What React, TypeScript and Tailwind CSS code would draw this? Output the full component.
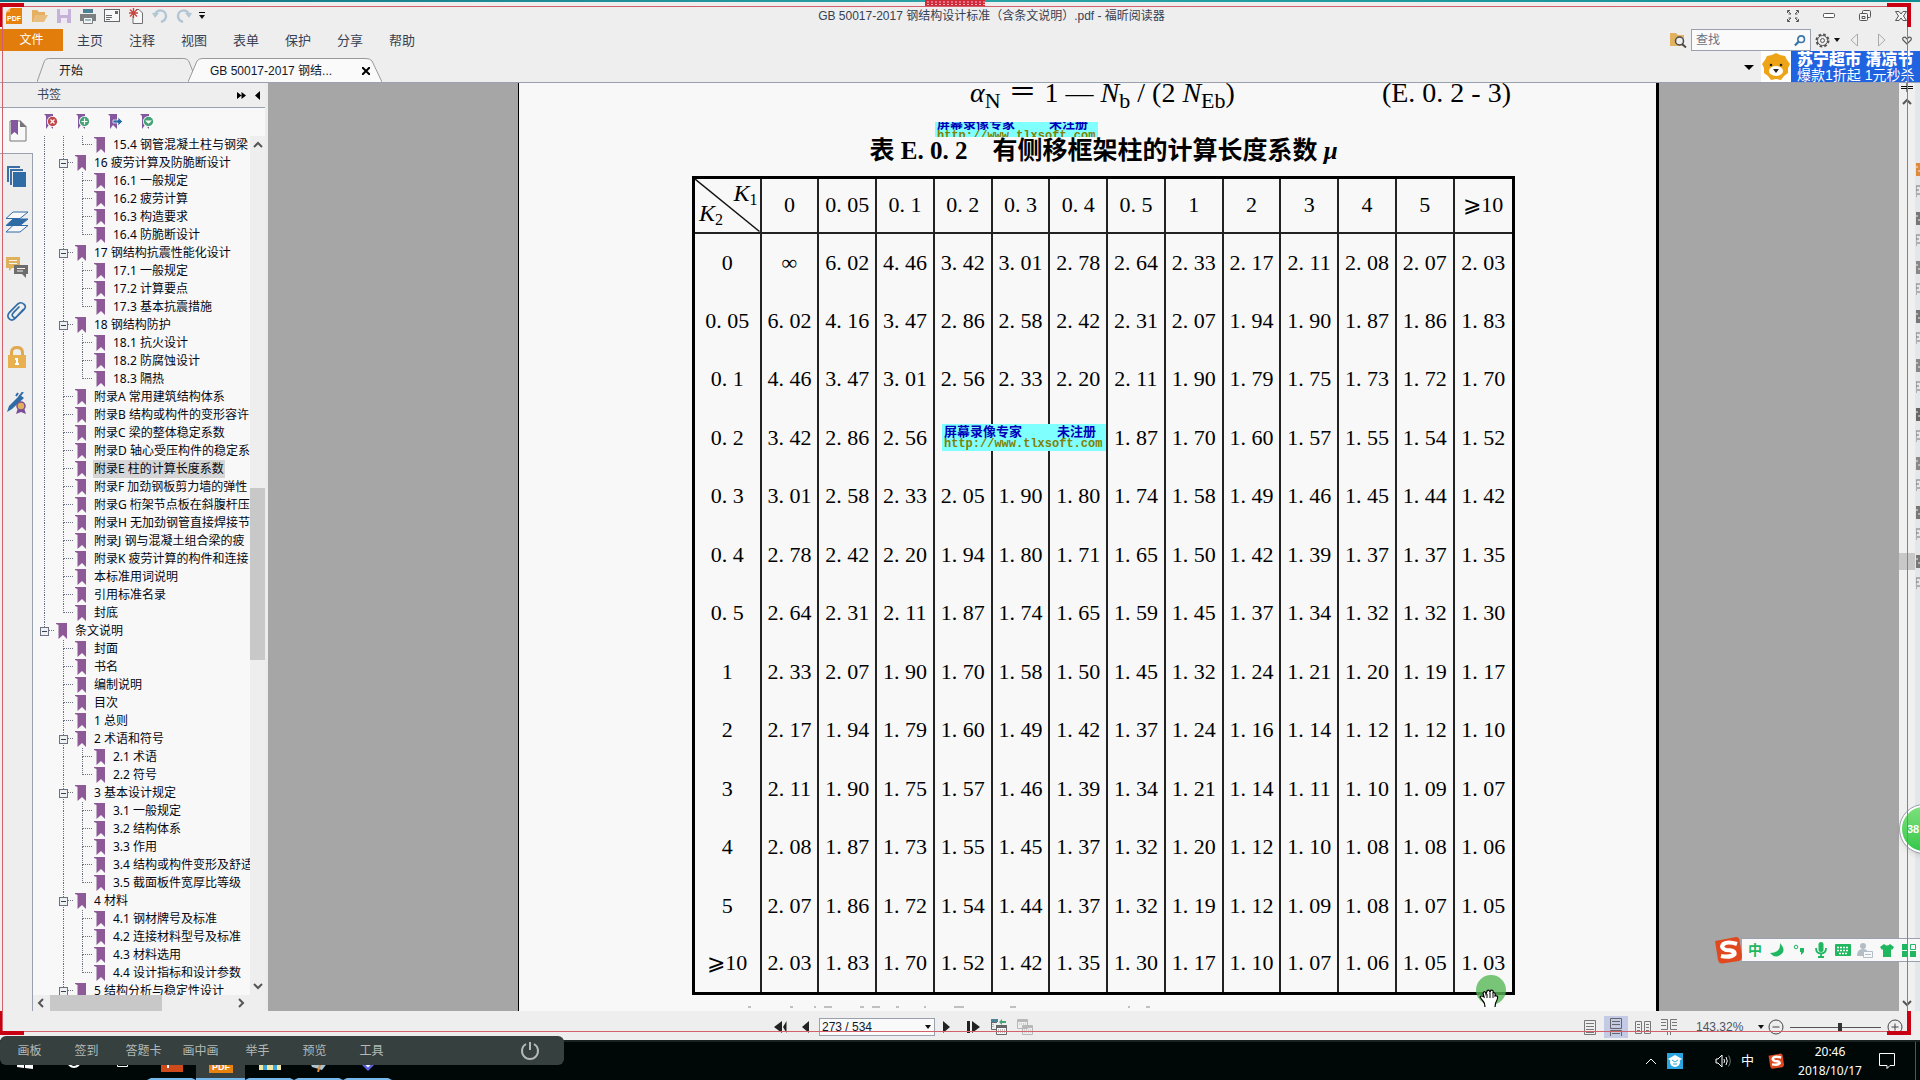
import type { ReactNode } from 'react';

const bookmarks = [
  { level: 3, text: '15.4 钢管混凝土柱与钢梁', last: true },
  { level: 2, text: '16 疲劳计算及防脆断设计', open: true },
  { level: 3, text: '16.1 一般规定' },
  { level: 3, text: '16.2 疲劳计算' },
  { level: 3, text: '16.3 构造要求' },
  { level: 3, text: '16.4 防脆断设计', last: true },
  { level: 2, text: '17 钢结构抗震性能化设计', open: true },
  { level: 3, text: '17.1 一般规定' },
  { level: 3, text: '17.2 计算要点' },
  { level: 3, text: '17.3 基本抗震措施', last: true },
  { level: 2, text: '18 钢结构防护', open: true },
  { level: 3, text: '18.1 抗火设计' },
  { level: 3, text: '18.2 防腐蚀设计' },
  { level: 3, text: '18.3 隔热', last: true },
  { level: 2, text: '附录A 常用建筑结构体系' },
  { level: 2, text: '附录B 结构或构件的变形容许' },
  { level: 2, text: '附录C 梁的整体稳定系数' },
  { level: 2, text: '附录D 轴心受压构件的稳定系' },
  { level: 2, text: '附录E 柱的计算长度系数', selected: true },
  { level: 2, text: '附录F 加劲钢板剪力墙的弹性' },
  { level: 2, text: '附录G 桁架节点板在斜腹杆压' },
  { level: 2, text: '附录H 无加劲钢管直接焊接节' },
  { level: 2, text: '附录J 钢与混凝土组合梁的疲' },
  { level: 2, text: '附录K 疲劳计算的构件和连接' },
  { level: 2, text: '本标准用词说明' },
  { level: 2, text: '引用标准名录' },
  { level: 2, text: '封底', last: true },
  { level: 1, text: '条文说明', open: true, last: true },
  { level: 2, text: '封面' },
  { level: 2, text: '书名' },
  { level: 2, text: '编制说明' },
  { level: 2, text: '目次' },
  { level: 2, text: '1 总则' },
  { level: 2, text: '2 术语和符号', open: true },
  { level: 3, text: '2.1 术语' },
  { level: 3, text: '2.2 符号', last: true },
  { level: 2, text: '3 基本设计规定', open: true },
  { level: 3, text: '3.1 一般规定' },
  { level: 3, text: '3.2 结构体系' },
  { level: 3, text: '3.3 作用' },
  { level: 3, text: '3.4 结构或构件变形及舒适' },
  { level: 3, text: '3.5 截面板件宽厚比等级', last: true },
  { level: 2, text: '4 材料', open: true },
  { level: 3, text: '4.1 钢材牌号及标准' },
  { level: 3, text: '4.2 连接材料型号及标准' },
  { level: 3, text: '4.3 材料选用' },
  { level: 3, text: '4.4 设计指标和设计参数', last: true },
  { level: 2, text: '5 结构分析与稳定性设计', open: true },
];

const lastRoot = bookmarks.findIndex((b) => b.level === 1);

const heads = ['0', '0.05', '0.1', '0.2', '0.3', '0.4', '0.5', '1', '2', '3', '4', '5', '⩾10'];

const values = [
  '∞ 6.02 4.46 3.42 3.01 2.78 2.64 2.33 2.17 2.11 2.08 2.07 2.03',
  '6.02 4.16 3.47 2.86 2.58 2.42 2.31 2.07 1.94 1.90 1.87 1.86 1.83',
  '4.46 3.47 3.01 2.56 2.33 2.20 2.11 1.90 1.79 1.75 1.73 1.72 1.70',
  '3.42 2.86 2.56 - - - 1.87 1.70 1.60 1.57 1.55 1.54 1.52',
  '3.01 2.58 2.33 2.05 1.90 1.80 1.74 1.58 1.49 1.46 1.45 1.44 1.42',
  '2.78 2.42 2.20 1.94 1.80 1.71 1.65 1.50 1.42 1.39 1.37 1.37 1.35',
  '2.64 2.31 2.11 1.87 1.74 1.65 1.59 1.45 1.37 1.34 1.32 1.32 1.30',
  '2.33 2.07 1.90 1.70 1.58 1.50 1.45 1.32 1.24 1.21 1.20 1.19 1.17',
  '2.17 1.94 1.79 1.60 1.49 1.42 1.37 1.24 1.16 1.14 1.12 1.12 1.10',
  '2.11 1.90 1.75 1.57 1.46 1.39 1.34 1.21 1.14 1.11 1.10 1.09 1.07',
  '2.08 1.87 1.73 1.55 1.45 1.37 1.32 1.20 1.12 1.10 1.08 1.08 1.06',
  '2.07 1.86 1.72 1.54 1.44 1.37 1.32 1.19 1.12 1.09 1.08 1.07 1.05',
  '2.03 1.83 1.70 1.52 1.42 1.35 1.30 1.17 1.10 1.07 1.06 1.05 1.03',
];

// book typesetting leaves a gap after the decimal point
const spaced = (v: string) => (v === '-' ? '' : v.replace('.', '. '));

const Flag = () => (
  <svg width="11" height="16" viewBox="0 0 11 16" className="shrink-0">
    <path d="M0 0H11V16L7 12L2.500 16V2L0 1Z" fill="#8d5a97" />
  </svg>
);

const FlagBadge = ({ color, children }: { color: string; children: ReactNode }) => (
  <svg width="16" height="18" viewBox="0 0 16 18">
    <path d="M1 1H10V16L6 12L3 16V3Z" fill="#8457a0" />
    <circle cx="9.500" cy="8.500" r="5.500" fill="#fff" />
    <circle cx="9.500" cy="8.500" r="4.700" fill={color} />
    <g stroke="#fff" strokeWidth="1.200" fill="none">{children}</g>
  </svg>
);

const Sogou = ({ size }: { size: number }) => (
  <svg width={size} height={size} viewBox="0 0 28 28">
    <path d="M1 5L22 1Q25 1 25.500 4L28 20Q28 24 25 25L8 27.500Q5 27.500 4 24Z" fill="#e0481f" />
    <path d="M23 8Q14 5 9.500 8Q6 12 12 14Q21 14 20.500 18Q17 22 7 20" fill="none" stroke="#fff" strokeWidth="4.200" />
  </svg>
);

const Caret = () => (
  <svg width="6" height="4" viewBox="0 0 6 4">
    <path d="M0 0H6L3 4Z" fill="#111" />
  </svg>
);

const Chevron = ({ d }: { d: string }) => (
  <svg width="10" height="10" viewBox="0 0 10 10" fill="none" stroke="#555" strokeWidth="2">
    <path d={d} />
  </svg>
);

const TreeCell = ({ line, joint, end, open }: { line: boolean; joint: boolean; end: boolean; open: boolean }) => (
  <span className="relative flex w-[19px] shrink-0 flex-col pl-[9px]">
    <span className={`h-[9px] ${line ? 'border-l border-dotted border-gray-500' : ''} ${joint ? 'border-b border-dotted border-b-gray-500' : ''}`} />
    <span className={`h-[9px] ${line && !end ? 'border-l border-dotted border-gray-500' : ''}`} />
    {open && (
      <button aria-label="折叠" className="absolute left-[5px] top-[5px] flex h-[9px] w-[9px] items-center justify-center border border-gray-500 bg-[#eef0f2]">
        <span className="h-px w-[5px] bg-gray-700" />
      </button>
    )}
  </span>
);

const Quick = () => (
  <div className="flex items-center">
    <button aria-label="福昕阅读器" className="mr-[2px] flex w-6 justify-center">
      <svg width="16" height="16" viewBox="0 0 16 16">
        <path d="M5 0H16V16H0V5Z" fill="#e8820e" />
        <path d="M0 4L4 0V4Z" fill="#f3b56a" />
        <text x="1" y="13" fontSize="7" fontWeight="bold" fill="#fff" fontFamily="Liberation Sans">PDF</text>
      </svg>
    </button>
    <button aria-label="打开" className="flex w-6 justify-center">
      <svg width="16" height="14" viewBox="0 0 16 14">
        <path d="M0 1H5L7 3H13V6H4L1 13H0Z" fill="#e6b062" />
        <path d="M4 6H16L12 13H1Z" fill="#e9bd7e" />
      </svg>
    </button>
    <button aria-label="保存" className="flex w-6 justify-center">
      <svg width="14" height="14" viewBox="0 0 14 14">
        <path d="M0 0H14V14H0Z" fill="#c4b2d8" />
        <path d="M3 0H11V6H3Z M4 9H10V14H4Z" fill="#eee8f4" />
      </svg>
    </button>
    <button aria-label="打印" className="flex w-6 justify-center">
      <svg width="16" height="16" viewBox="0 0 16 16">
        <path d="M3 1H13V5H3Z" fill="#4b8296" />
        <path d="M0 6H16V13H0Z" fill="#7b7f82" />
        <path d="M3.500 9.500H12.500V15.500H3.500Z" fill="#f4f4f4" stroke="#7b7f82" />
        <path d="M5 12H11" stroke="#4b8296" />
      </svg>
    </button>
    <button aria-label="邮件" className="flex w-6 justify-center">
      <svg width="16" height="13" viewBox="0 0 16 13" fill="none" stroke="#65686a">
        <rect x=".5" y=".5" width="15" height="12" fill="#f8f8f8" />
        <path d="M2 6.500H8M2 8.500H8M2 10.500H6" />
        <path d="M11 2H14V5H11Z" fill="#65686a" stroke="none" />
      </svg>
    </button>
    <button aria-label="新建" className="flex w-6 justify-center">
      <svg width="15" height="16" viewBox="0 0 15 16" fill="none">
        <path d="M4 8V15.500H13.500V5L10 1.500H7" stroke="#707070" fill="#f8f8f8" />
        <path d="M4.500 0V10M0 5H9M1 1.500L8 8.500M8 1.500L1 8.500" stroke="#c8443c" strokeWidth="1.300" />
      </svg>
    </button>
    <button aria-label="撤销" className="flex w-6 justify-center">
      <svg width="16" height="15" viewBox="0 0 16 15">
        <path d="M3 7C4 1 14 1 14 8C14 11 12 13 9 14" fill="none" stroke="#b3c6d4" strokeWidth="2.500" />
        <path d="M0 5H7L3 10Z" fill="#b3c6d4" />
      </svg>
    </button>
    <button aria-label="重做" className="flex w-6 justify-center">
      <svg width="16" height="15" viewBox="0 0 16 15">
        <path d="M13 7C12 1 2 1 2 8C2 11 4 13 7 14" fill="none" stroke="#b3c6d4" strokeWidth="2.500" />
        <path d="M16 5H9L13 10Z" fill="#b3c6d4" />
      </svg>
    </button>
    <button aria-label="自定义" className="flex w-3 flex-col items-center gap-[2px]">
      <span className="h-px w-[6px] bg-black" />
      <Caret />
    </button>
  </div>
);

const WindowButtons = () => (
  <div className="flex items-center text-gray-600">
    <button aria-label="全屏" className="flex w-9 justify-center">
      <svg width="14" height="14" viewBox="0 0 14 14" fill="none" stroke="#555">
        <path d="M1.500 4V1.500H4M2 2L5 5H2.500M10 1.500H12.500V4M12 2L9 5H11.500M1.500 10V12.500H4M2 12L5 9H2.500M10 12.500H12.500V10M12 12L9 9H11.500" />
      </svg>
    </button>
    <button aria-label="最小化" className="flex w-9 justify-center">
      <svg width="12" height="5" viewBox="0 0 12 5">
        <rect x=".5" y=".5" width="11" height="4" rx="1" fill="#fff" stroke="#555" />
      </svg>
    </button>
    <button aria-label="还原" className="flex w-9 justify-center">
      <svg width="12" height="12" viewBox="0 0 12 12" fill="#f4f4f4" stroke="#555">
        <rect x="3.500" y=".5" width="8" height="7" rx="1" />
        <rect x=".5" y="3.500" width="8" height="7" rx="1" />
        <path d="M3 6.500H6V8.500H3Z" />
      </svg>
    </button>
    <button aria-label="关闭" className="flex w-9 justify-center">
      <svg width="12" height="10" viewBox="0 0 12 10">
        <path d="M.5.5H4L6 3L8 .5H11.500L8.500 5L11.500 9.500H8L6 7L4 9.500H.5L3.500 5Z" fill="#f4f4f4" stroke="#555" />
      </svg>
    </button>
  </div>
);

const SearchBar = () => (
  <div className="flex items-center">
    <svg width="17" height="16" viewBox="0 0 17 16" className="mr-1">
      <path d="M0 1H6L8 3H14V14H0Z" fill="#e2b263" />
      <circle cx="9.500" cy="9" r="4" fill="#eee" stroke="#4a4a4a" strokeWidth="1.500" />
      <path d="M12 12L16 15.500" stroke="#4a4a4a" strokeWidth="2" />
    </svg>
    <div className="flex h-[22px] w-[120px] items-center border border-gray-400 bg-[#fafafa] pr-1">
      <input aria-label="查找" placeholder="查找" className="w-full min-w-0 bg-transparent pl-1 text-xs outline-none placeholder:text-gray-500" />
      <svg width="13" height="13" viewBox="0 0 13 13" fill="none" stroke="#3974a8">
        <circle cx="8" cy="5" r="3.700" strokeWidth="1.800" />
        <path d="M5.500 7.500L1 12" strokeWidth="2.500" />
      </svg>
    </div>
    <button aria-label="设置" className="ml-1 flex items-center gap-1">
      <svg width="15" height="15" viewBox="0 0 15 15" fill="none" stroke="#555">
        <circle cx="7.500" cy="7.500" r="6" strokeWidth="2" strokeDasharray="2.700 2" />
        <circle cx="7.500" cy="7.500" r="5" />
        <circle cx="7.500" cy="7.500" r="2" />
      </svg>
      <Caret />
    </button>
    <button aria-label="上一个" className="ml-[2px] flex w-6 justify-center">
      <svg width="8" height="14" viewBox="0 0 8 14" fill="none" stroke="#aaa"><path d="M7.500 1V13L1 7Z" /></svg>
    </button>
    <button aria-label="下一个" className="ml-1 flex w-6 justify-center">
      <svg width="8" height="14" viewBox="0 0 8 14" fill="none" stroke="#aaa"><path d="M.5 1V13L7 7Z" /></svg>
    </button>
    <button aria-label="收藏" className="flex w-[26px] justify-center">
      <svg width="10" height="9" viewBox="0 0 10 9" fill="none" stroke="#555" strokeWidth="1.200">
        <path d="M5 8L1 4Q0 1 3 1L5 3L7 1Q10 1 9 4Z" />
      </svg>
    </button>
  </div>
);

const Tab = ({ active, className, children }: { active?: boolean; className: string; children: ReactNode }) => (
  <div className={`relative flex h-6 items-center pt-[2px] ${className}`}>
    <svg viewBox="0 0 194 24" preserveAspectRatio="none" className="absolute inset-0 h-full w-full">
      <path d="M0 24L9 3Q11 .5 14 .5H178Q182 .5 184 3L194 24" fill={active ? '#fafafa' : '#eeeeee'} stroke="#999" vectorEffect="non-scaling-stroke" />
    </svg>
    {children}
  </div>
);

const Banner = () => (
  <div className="flex h-[31px] items-stretch">
    <span className="flex w-[30px] items-center justify-center bg-white">
      <svg width="30" height="30" viewBox="0 0 30 30">
        <path d="M15 1L19 3L24 4L26 8L29 12L27 16L27 21L23 24L20 28L15 27L10 28L7 24L3 21L3 16L1 12L4 8L6 4L11 3Z" fill="#eea417" />
        <ellipse cx="15" cy="19" rx="7" ry="5" fill="#fff" />
        <circle cx="10" cy="13" r="1.300" fill="#222" />
        <circle cx="20" cy="13" r="1.300" fill="#222" />
        <path d="M12 17H18L15 21Z" fill="#222" />
      </svg>
    </span>
    <a href="#" className="flex w-[129px] flex-col justify-center overflow-hidden whitespace-nowrap bg-[#1f63e0] pl-[6px] text-white">
      <span className="text-base font-black leading-4">苏宁超市 清凉节</span>
      <span className="text-sm leading-[14px]">爆款1折起 1元秒杀</span>
    </a>
  </div>
);

const NavStrip = () => (
  <nav className="flex w-[33px] shrink-0 flex-col">
    <button aria-label="书签" className="flex h-[46px] items-center justify-center border-b border-gray-400 bg-[#f8f8f8] pl-[2px]">
      <svg width="18" height="22" viewBox="0 0 18 22">
        <path d="M1 1H11L17 7V21H1Z" fill="#f8f8f8" stroke="#777" />
        <path d="M11 0V7H18Z" fill="#777" />
        <path d="M2 0H9V15L5.500 12L2 15Z" fill="#8457a0" />
      </svg>
    </button>
    <div className="flex flex-1 flex-col border-r border-gray-400 pl-[2px]">
      <button aria-label="页面" className="flex h-[45px] items-center justify-center">
        <svg width="20" height="22" viewBox="0 0 20 22">
          <path d="M1 16V1H13M4 19V4H16" fill="none" stroke="#3a6ea5" strokeWidth="2" />
          <path d="M6 6H19V21H6Z" fill="#2f6ba5" />
        </svg>
      </button>
      <button aria-label="图层" className="flex h-[45px] items-center justify-center">
        <svg width="24" height="22" viewBox="0 0 24 22" stroke="#2f6ba5">
          <path d="M8 14.500H23L15 21H1Z" fill="#f8f8f8" />
          <path d="M8 8H23L15 14.500H1Z" fill="#2f6ba5" />
          <path d="M8 1H23L15 7.500H1Z" fill="#f8f8f8" />
        </svg>
      </button>
      <button aria-label="注释" className="flex h-[45px] items-center justify-center">
        <svg width="22" height="22" viewBox="0 0 22 22">
          <path d="M0 1H14V12H6L3 15V12H0Z" fill="#e0b15c" />
          <path d="M8 9H22V18H20V22L16 18H8Z" fill="#6d6d6d" />
          <path d="M3 4.500H11M3 7.500H11M11 12.500H19M11 15H17" stroke="#f4f4f4" />
        </svg>
      </button>
      <button aria-label="附件" className="flex h-[45px] items-center justify-center">
        <svg width="20" height="21" viewBox="0 0 24 24" fill="none" stroke="#2f6ba5" strokeWidth="2">
          <path d="M20 9L10 20Q6 24 3 21Q-1 18 3 13L13 3Q17 0 20 3Q24 6 20 10L11 19Q8 20 7 18Q5 16 8 13L15 6" />
        </svg>
      </button>
      <button aria-label="安全" className="flex h-[46px] items-center justify-center">
        <svg width="18" height="22" viewBox="0 0 18 22">
          <path d="M3.500 11V6Q4 1.500 9 1.500Q14 1.500 14.500 6V11" fill="none" stroke="#e0a950" strokeWidth="3" />
          <path d="M0 9H18V22H0Z" fill="#e8b04e" />
          <path d="M9 12V18M7 13H10M7 18H11" stroke="#fff" strokeWidth="2" />
        </svg>
      </button>
      <button aria-label="签名" className="flex h-[45px] items-center justify-center">
        <svg width="20" height="22" viewBox="0 0 20 22">
          <path d="M16 0L12 5M11 1L9 4" stroke="#2f6ba5" strokeWidth="2" />
          <path d="M0 20L2 14L13 3L17 6L5 17Z" fill="#2f6ba5" />
          <path d="M11 16L9 22L14 20L19 22L17 16Z" fill="#7b4d96" />
          <circle cx="14" cy="14" r="4" fill="#e0b15c" stroke="#7b4d96" strokeWidth="1.500" />
        </svg>
      </button>
    </div>
  </nav>
);

const BookmarkPanel = () => (
  <aside className="flex w-[268px] shrink-0 flex-col border-r-[3px] border-[#ececec]">
    <header className="flex h-[25px] items-center border-b border-gray-400 pl-[37px] pr-[5px] text-xs text-gray-700">
      <h2 className="flex-1">书签</h2>
      <button aria-label="展开" className="mr-[9px]">
        <svg width="9" height="7" viewBox="0 0 9 7"><path d="M0 0L4.500 3.500L0 7ZM4.500 0L9 3.500L4.500 7Z" /></svg>
      </button>
      <button aria-label="隐藏">
        <svg width="5" height="9" viewBox="0 0 5 9"><path d="M5 0V9L0 4.500Z" /></svg>
      </button>
    </header>
    <div className="flex min-h-0 flex-1">
      <NavStrip />
      <div className="flex min-w-0 flex-1 flex-col bg-[#f8f8f8]">
        <div className="flex h-7 shrink-0 items-center gap-4 pl-[10px]">
          <button aria-label="删除书签"><FlagBadge color="#c0484a"><path d="M7.500 6.500L11.500 10.500M11.500 6.500L7.500 10.500" /></FlagBadge></button>
          <button aria-label="新建书签"><FlagBadge color="#45a377"><path d="M9.500 5.500V11.500M6.500 8.500H12.500" /></FlagBadge></button>
          <button aria-label="跳转书签">
            <svg width="16" height="18" viewBox="0 0 16 18">
              <path d="M1 1H10V16L6 12L3 16V3Z" fill="#8457a0" />
              <path d="M6 7H11V4L15.500 8.500L11 13V10H6Z" fill="#2f6ba5" stroke="#fff" strokeWidth=".7" />
            </svg>
          </button>
          <button aria-label="展开书签"><FlagBadge color="#45a377"><path d="M7.500 8H11.500L9.500 10Z" fill="#fff" /></FlagBadge></button>
        </div>
        <div className="flex min-h-0 flex-1">
          <ul className="min-w-0 flex-1 overflow-hidden pl-[2px] font-['Noto_Sans','Noto_Sans_CJK_SC',sans-serif] text-xs leading-[18px] text-gray-950">
            {bookmarks.map((b, i) => (
              <li key={i} className="flex h-[18px] whitespace-nowrap">
                {[1, 2, 3].slice(0, b.level).map((n) => (
                  <TreeCell
                    key={n}
                    line={n > 1 || i <= lastRoot}
                    joint={n === b.level}
                    end={n === b.level && !!b.last}
                    open={n === b.level && !!b.open}
                  />
                ))}
                <span className="flex w-5 shrink-0 items-center pl-[2px]"><Flag /></span>
                <a href="#" className={b.selected ? 'bg-[#d6d6d6] px-px' : 'px-px'}>{b.text}</a>
              </li>
            ))}
          </ul>
          <div className="flex w-[15px] shrink-0 flex-col items-center bg-[#eeeeee] py-1">
            <Chevron d="M1 7L5 3L9 7" />
            <div className="flex-[338]" />
            <div className="w-full flex-[173] bg-[#c8c8c8]" />
            <div className="flex-[321]" />
            <Chevron d="M1 3L5 7L9 3" />
          </div>
        </div>
        <div className="flex h-4 shrink-0 items-center bg-[#eeeeee] pl-[3px] pr-[19px]">
          <Chevron d="M7 1L3 5L7 9" />
          <div className="ml-1 h-full w-28 bg-[#c8c8c8]" />
          <div className="flex-1" />
          <Chevron d="M3 1L7 5L3 9" />
        </div>
      </div>
    </div>
  </aside>
);

const Watermark = ({ className }: { className: string }) => (
  <div className={`absolute flex flex-col justify-center overflow-hidden whitespace-nowrap bg-[#80ffff] px-[2px] font-bold ${className}`}>
    <div className="flex shrink-0 justify-between pr-2 text-[13px] leading-[13px] text-[#0000b8]">
      <span>屏幕录像专家</span>
      <span>未注册</span>
    </div>
    <div className="shrink-0 font-['Liberation_Mono',monospace] text-xs leading-[13px] text-[#808000]">http://www.tlxsoft.com</div>
  </div>
);

const CoefficientTable = () => (
  <table className="w-full table-fixed border-collapse border-[3px] border-black text-center text-[22px] leading-7">
    <thead>
      <tr className="h-[55px]">
        <th className="relative w-[67px] border-b-2 border-[#222] p-0 align-top font-normal">
          <svg viewBox="0 0 68 56" preserveAspectRatio="none" className="absolute inset-0 h-full w-full">
            <path d="M0 0L68 56" stroke="#111" strokeWidth="1.500" />
          </svg>
          <div className="relative flex flex-col pt-[5px] text-2xl leading-[18px]">
            <span className="pr-[2px] text-right"><i>K</i><sub className="text-base leading-none">1</sub></span>
            <span className="pl-1 text-left"><i>K</i><sub className="text-base leading-none">2</sub></span>
          </div>
        </th>
        {heads.map((h, i) => (
          <th key={h} className={`border-b-2 border-l-2 border-[#222] p-0 font-normal ${i === 12 ? 'w-[60px]' : ''}`}>{spaced(h)}</th>
        ))}
      </tr>
    </thead>
    <tbody>
      {values.map((row, i) => (
        <tr key={i} className="odd:h-[59px] even:h-[58px]">
          <th className="p-0 font-normal">{spaced(heads[i])}</th>
          {row.split(' ').map((v, j) => (
            <td key={j} className="whitespace-nowrap border-l-2 border-[#222] p-0">{spaced(v)}</td>
          ))}
        </tr>
      ))}
    </tbody>
  </table>
);

const DocumentView = () => (
  <main className="flex min-w-0 flex-1 overflow-hidden bg-[#a6a6a6] pl-[250px] pr-[240px]">
    <article className="relative min-w-0 flex-1 overflow-hidden border-l border-r-[3px] border-black bg-[#f8f8f8] pl-[173px] pr-[141px] font-['Liberation_Serif','Noto_Sans_CJK_SC',serif] text-black">
      <div className="-mt-1 flex h-12 whitespace-nowrap pl-[278px] pr-1 text-[28px] leading-7">
        <span><i>α</i><sub className="text-[22px] leading-none">N</sub></span>
        <span className="ml-2">＝</span>
        <span className="ml-2">1 — <i>N</i><sub className="text-[22px] leading-none">b</sub> / (2 <i>N</i><sub className="text-[22px] leading-none">Eb</sub>)</span>
        <span className="ml-auto">(E. 0. 2 - 3)</span>
      </div>
      <h1 className="mb-1 flex h-[45px] items-center justify-center whitespace-nowrap pt-[2px] text-[25px] font-bold">
        表 E. 0. 2　有侧移框架柱的计算长度系数&nbsp;<i>μ</i>
      </h1>
      <CoefficientTable />
      <svg width="410" height="2" viewBox="0 0 410 2" className="ml-14 mt-[11px]">
        <path d="M0 1H3M42 1H45M66 1H68M76 1H84M112 1H116M124 1H132M148 1H151M176 1H178M206 1H216M262 1H268M380 1H382M398 1H402" stroke="#888" />
      </svg>
      <Watermark className="left-[416px] top-[39px] h-[15px] w-[163px]" />
      <Watermark className="left-[423px] top-[341px] h-[27px] w-[164px]" />
      <svg width="32" height="34" viewBox="0 0 32 34" className="absolute left-[956px] top-[892px]">
        <circle cx="16" cy="15" r="15" fill="#57b857" fillOpacity=".8" />
        <path d="M10 32Q10 28 8 26L5 22Q6 20 9 22L8 18Q10 15 11 19L12 16Q14 14 15 17L16 15Q19 15 18 18Q21 17 20 21Q24 20 22 25Q20 28 20 32" fill="#fff" stroke="#000" strokeWidth="1.200" />
        <path d="M12 19V23M15 18V23M18 19V23" stroke="#000" />
      </svg>
    </article>
  </main>
);

const sideItems = ['#e08a3c', '#777', '#888', '#777', '#888', '#666', '#888', '#777', '#777'];

const RightEdge = () => (
  <div className="flex w-[21px] shrink-0 bg-[#e3e7ea]">
    <div className="flex w-4 flex-col items-center bg-[#f0f0f0] pb-[3px]">
      <svg width="12" height="9" viewBox="0 0 12 9" className="mb-[5px]">
        <path d="M0 3.500H12M0 5.500H12M6 0V9" stroke="#111" />
      </svg>
      <Chevron d="M1 7L5 3L9 7" />
      <div className="flex-[446]" />
      <div className="w-full flex-[17] bg-[#c8c8c8]" />
      <div className="flex-[428]" />
      <Chevron d="M1 3L5 7L9 3" />
    </div>
    <div className="flex flex-col gap-[10px] pl-px pt-[80px]">
      {sideItems.map((c, i) => (
        <svg key={i} width="4" height="39" viewBox="0 0 4 39">
          <path d="M0 0H4V13H0Z" fill={c} />
          <path d="M0 4H2M2 8H4" stroke="#eee" />
          <path d="M0 23H4M0 27H3M1 31H4M0 23V34" stroke="#777" />
        </svg>
      ))}
    </div>
  </div>
);

const StatusBar = () => (
  <footer className="flex h-[29px] shrink-0 items-start bg-[#eeeeee] pt-[5px]">
    <div className="flex h-[22px] flex-1 items-center pl-[774px]">
      <button aria-label="第一页" className="w-[27px]">
        <svg width="13" height="12" viewBox="0 0 13 12"><path d="M8 0V12L0 6ZM9 6L12.500 0V12Z" fill="#222" /></svg>
      </button>
      <button aria-label="上一页" className="w-[18px]">
        <svg width="8" height="12" viewBox="0 0 8 12"><path d="M8 0V12L1 6Z" fill="#222" /></svg>
      </button>
      <select aria-label="页码" className="h-[18px] w-[116px] appearance-none border border-gray-400 bg-[#fafafa] px-[2px] text-xs leading-4">
        <option>273 / 534</option>
      </select>
      <span className="pointer-events-none -ml-[10px] mr-1"><Caret /></span>
      <button aria-label="下一页" className="ml-2 w-6">
        <svg width="8" height="12" viewBox="0 0 8 12"><path d="M0 0L7 6L0 12Z" fill="#222" /></svg>
      </button>
      <button aria-label="最后一页" className="w-6">
        <svg width="13" height="12" viewBox="0 0 13 12"><path d="M0 0H3V12H0ZM5 0L13 6L5 12Z" fill="#222" /></svg>
      </button>
      <button aria-label="后退视图" className="w-[26px]">
        <svg width="16" height="16" viewBox="0 0 16 16" fill="none">
          <path d="M.5 1V10.500H5M.5 3.500H6" stroke="#666" /><path d="M0 0H7V3H0Z" fill="#4b8296" />
          <path d="M5.500 6.500H15.500V15.500H5.500Z" fill="#f8f8f8" stroke="#666" /><path d="M5 6H16V9H5Z" fill="#666" />
          <path d="M7 11H14M7 13H14M2 5V9" stroke="#888" strokeDasharray="1 1" />
          <path d="M8 3L11 0V2H15V4H11V6Z" fill="#45a377" />
        </svg>
      </button>
      <button aria-label="前进视图">
        <svg width="16" height="16" viewBox="0 0 16 16" fill="none" stroke="#b8b8b8">
          <path d="M.5.5H10.500V9.500H.5ZM5.500 6.500H15.500V15.500H5.500Z" fill="#eee" />
          <path d="M0 2H10M5 8H15" strokeWidth="2" />
          <path d="M2 5H9M7 11H14M7 13H14" strokeDasharray="1 1" />
        </svg>
      </button>
    </div>
    <div className="flex h-[22px] items-center pr-[17px]">
      <button aria-label="单页" className="flex w-[24px] justify-center">
        <svg width="12" height="15" viewBox="0 0 12 15" fill="none" stroke="#777"><path d="M.5.500H11.500V14.500H.5ZM2 3.500H10M2 6.500H10M2 9.500H10M2 12.500H10" /></svg>
      </button>
      <button aria-label="连续" className="mx-[2px] flex h-full w-6 items-center justify-center bg-[#c3cae6]">
        <svg width="12" height="18" viewBox="0 0 12 18" fill="none" stroke="#666"><path d="M.5 .5H11.500V10.500H.5ZM2 3.500H10M2 6.500H10M.5 18V12.500H11.500V18M2 15.500H10" /></svg>
      </button>
      <button aria-label="双页" className="flex w-[26px] justify-center">
        <svg width="16" height="13" viewBox="0 0 16 13" fill="none" stroke="#777"><path d="M.5.5H6.500V12.500H.5ZM9.500.5H15.500V12.500H9.500ZM2 3.500H5M2 6.500H5M2 9.500H5M11 3.500H14M11 6.500H14M11 9.500H14" /></svg>
      </button>
      <button aria-label="连续双页" className="flex w-[26px] justify-center">
        <svg width="16" height="16" viewBox="0 0 16 16" fill="none" stroke="#777"><path d="M0 .5H6.500V10.500H0M16 .5H9.500V10.500H16M0 3.500H5M0 6.500H5M11 3.500H16M11 6.500H16M0 12.500H6.500V16M16 12.500H9.500V16" /></svg>
      </button>
      <select aria-label="缩放" className="ml-[10px] w-[66px] appearance-none bg-transparent px-1 text-xs text-gray-600">
        <option>143.32%</option>
      </select>
      <Caret />
      <button aria-label="缩小" className="ml-1">
        <svg width="16" height="16" viewBox="0 0 16 16" fill="none" stroke="#444"><circle cx="8" cy="8" r="7" /><path d="M4.500 8H11.500" /></svg>
      </button>
      <input
        type="range"
        aria-label="缩放比例"
        defaultValue={55}
        className="mx-[6px] h-4 w-[91px] appearance-none bg-transparent bg-[linear-gradient(#555,#555)] bg-[length:100%_1px] bg-center bg-no-repeat [&::-webkit-slider-thumb]:h-2 [&::-webkit-slider-thumb]:w-1 [&::-webkit-slider-thumb]:appearance-none [&::-webkit-slider-thumb]:bg-[#333]"
      />
      <button aria-label="放大">
        <svg width="16" height="16" viewBox="0 0 16 16" fill="none" stroke="#444"><circle cx="8" cy="8" r="7" /><path d="M4.500 8H11.500M8 4.500V11.500" /></svg>
      </button>
    </div>
  </footer>
);

const Taskbar = () => (
  <footer className="flex h-10 shrink-0 border-t-2 border-[#1a2321] bg-[#000807]">
    <div className="flex flex-1">
      <button aria-label="开始" className="flex w-[49px] items-center justify-center">
        <svg width="16" height="16" viewBox="0 0 16 16" fill="#fff"><path d="M0 2L7 1V7H0ZM8 1L16 0V7H8ZM0 8H7V15L0 14ZM8 8H16V16L8 15Z" /></svg>
      </button>
      <button aria-label="搜索" className="flex w-[49px] items-center justify-center">
        <svg width="16" height="16" viewBox="0 0 16 16" fill="none" stroke="#fff" strokeWidth="2"><circle cx="8" cy="8" r="6" /></svg>
      </button>
      <button aria-label="任务视图" className="flex w-[49px] items-center justify-center">
        <svg width="16" height="16" viewBox="0 0 16 16" fill="none" stroke="#fff"><path d="M2.500 2.500H12.500V13.500H2.500Z" /></svg>
      </button>
      <button aria-label="演示文稿" className="flex w-[49px] items-end justify-center border-x-4 border-b-2 border-x-transparent border-b-[#76b9ed] pb-[6px]">
        <svg width="22" height="22" viewBox="0 0 22 22"><path d="M0 0H22V22H0Z" fill="#cf4a1a" /><path d="M7 18V8H12V12H7" fill="none" stroke="#fff" strokeWidth="2" /></svg>
      </button>
      <button aria-label="福昕阅读器" className="flex w-[49px] items-end justify-center border-b-2 border-[#76b9ed] bg-[#38403f] pb-[5px]">
        <svg width="24" height="24" viewBox="0 0 24 24"><path d="M0 0H24V24H0Z" fill="#e8820e" /><text x="3" y="21" fontSize="9" fontWeight="bold" fill="#fff" fontFamily="Liberation Sans">PDF</text></svg>
      </button>
      <button aria-label="录屏" className="flex w-[49px] items-end justify-center border-x-4 border-b-2 border-x-transparent border-b-[#76b9ed] pb-2">
        <svg width="22" height="20" viewBox="0 0 22 20"><path d="M0 4H22V20H0Z" fill="#f2e7a4" /><path d="M4 14H8V20H4ZM14 14H18V20H14Z" fill="#3aa6d8" /></svg>
      </button>
      <button aria-label="画图" className="flex w-[49px] items-end justify-center border-x-4 border-b-2 border-x-transparent border-b-[#76b9ed] pb-[6px]">
        <svg width="22" height="22" viewBox="0 0 22 22"><path d="M1 10L20 12L14 20L4 17Z" fill="#a9c6d6" /><path d="M14 8L10 22" stroke="#e08a3c" strokeWidth="2" /></svg>
      </button>
      <button aria-label="课堂" className="flex w-[49px] items-end justify-center border-x-4 border-b-2 border-x-transparent border-b-[#76b9ed] pb-[7px]">
        <svg width="16" height="18" viewBox="0 0 16 18"><path d="M0 0H16V10L8 18L0 10Z" fill="#5a5fe0" /><path d="M5 10L8 13L11 10" stroke="#fff" fill="none" strokeWidth="2" /></svg>
      </button>
    </div>
    <div className="flex items-center text-white">
      <button aria-label="显示隐藏图标" className="mr-[10px]">
        <svg width="12" height="8" viewBox="0 0 12 8" fill="none" stroke="#fff"><path d="M1 7L6 2L11 7" /></svg>
      </button>
      <svg width="16" height="16" viewBox="0 0 16 16" className="mr-8">
        <path d="M0 0H16V16H0Z" fill="#2aa5e0" />
        <path d="M8 2L15 6L8 10L1 6Z" fill="#fff" />
        <circle cx="8" cy="9" r="5" fill="#fff" />
        <path d="M5 7L8 9L11 7M6 11H10" stroke="#2aa5e0" fill="none" />
      </svg>
      <button aria-label="音量" className="mr-[9px]">
        <svg width="17" height="14" viewBox="0 0 17 14" fill="none" stroke="#fff"><path d="M1 5H3L7 1V13L3 9H1ZM9 5Q10 7 9 9M11 3Q13.500 7 11 11" /><path d="M13.500 1.500Q17 7 13.500 12.500" stroke="#777" /></svg>
      </button>
      <span className="mr-[14px] text-[13px]">中</span>
      <span className="mr-[11px]"><Sogou size={16} /></span>
      <time className="flex w-[70px] flex-col text-center font-['Noto_Sans',sans-serif] text-xs leading-[19px]">
        <span>20:46</span>
        <span>2018/10/17</span>
      </time>
      <button aria-label="通知" className="ml-[14px] mr-5">
        <svg width="16" height="16" viewBox="0 0 16 16" fill="none" stroke="#fff"><path d="M.5.5H15.500V12.500H11L8 15.500V12.500H.5Z" /></svg>
      </button>
      <span className="mr-1 h-full w-px bg-gray-600" />
    </div>
  </footer>
);

const ClassToolbar = () => (
  <div className="absolute bottom-[15px] left-0 flex h-[29px] w-[564px] items-center rounded-md bg-[#36403e] pl-px text-xs text-[#b4b9b7]">
    {['画板', '签到', '答题卡', '画中画', '举手', '预览', '工具'].map((t) => (
      <button key={t} className="w-[57px] text-center">{t}</button>
    ))}
    <button aria-label="退出" className="ml-auto mr-6">
      <svg width="20" height="20" viewBox="0 0 20 20" fill="none" stroke="#b4b9b7" strokeWidth="2">
        <path d="M6 3A8 8 0 1 0 14 3M10 1V9" />
      </svg>
    </button>
  </div>
);

const ImeBar = () => (
  <div className="absolute bottom-[118px] right-0 flex h-6 w-[178px] items-center border-y border-gray-400 bg-[#f8f8f8] pl-[2px] text-[#1fb860]">
    <span className="absolute -left-7 -top-[3px]"><Sogou size={28} /></span>
    <button className="w-[22px] text-sm font-bold leading-4">中</button>
    <button aria-label="半角" className="flex w-[22px] justify-center">
      <svg width="14" height="14" viewBox="0 0 14 14" fill="currentColor"><path d="M10 0Q17 8 10 12Q5 16 0 10Q11 10 10 0Z" /></svg>
    </button>
    <button aria-label="标点" className="flex w-[22px] justify-center">
      <svg width="12" height="12" viewBox="0 0 12 12"><circle cx="3" cy="3" r="1.800" fill="none" stroke="currentColor" /><path d="M7 4H11V8L8 11V8H7Z" fill="currentColor" /></svg>
    </button>
    <button aria-label="语音" className="flex w-[22px] justify-center">
      <svg width="12" height="16" viewBox="0 0 12 16"><rect x="3.500" y="0" width="5" height="10" rx="2.500" fill="currentColor" /><path d="M1 6Q1 11.500 6 11.500Q11 11.500 11 6M6 12V15M3 15H9" fill="none" stroke="currentColor" strokeWidth="1.800" /></svg>
    </button>
    <button aria-label="键盘" className="flex w-[22px] justify-center">
      <svg width="16" height="12" viewBox="0 0 16 12"><rect width="16" height="12" rx="1" fill="currentColor" /><path d="M2 3.500H14M2 6.500H14M4 9.500H12" stroke="#fff" strokeWidth="1.500" strokeDasharray="2 1" /></svg>
    </button>
    <button aria-label="账号" className="flex w-[22px] justify-center">
      <svg width="16" height="15" viewBox="0 0 16 15"><circle cx="6" cy="3" r="3" fill="#b3bdc6" /><path d="M0 13Q0 6 6 6Q10 6 11 9V13Z" fill="#b3bdc6" /><path d="M6.500 8.500H15.500V14.500H6.500Z" fill="#f8f8f8" stroke="#b3bdc6" /><path d="M8 11.500H14" stroke="#b3bdc6" /></svg>
    </button>
    <button aria-label="皮肤" className="flex w-[22px] justify-center">
      <svg width="14" height="13" viewBox="0 0 14 13" fill="currentColor"><path d="M4 0Q7 3 10 0L14 3L12 6L11 5V13H3V5L2 6L0 3Z" /></svg>
    </button>
    <button aria-label="工具箱" className="flex w-[22px] justify-center">
      <svg width="14" height="13" viewBox="0 0 14 13" fill="currentColor"><path d="M0 0H6V6H0ZM0 7H6V13H0ZM8 7H14V13H8Z" /><path d="M8.500.5H13.500V5.500H8.500Z" fill="none" stroke="currentColor" /></svg>
    </button>
  </div>
);

const RecordFrame = () => (
  <div className="pointer-events-none absolute inset-x-0 bottom-[45px] top-[3px]">
    <div className="absolute bottom-[3px] left-[2px] right-3 top-[3px] border border-[#d2606a]" />
    <div className="absolute left-0 top-0 h-6 w-6 border-l-2 border-t-4 border-[#c90012]" />
    <div className="absolute right-[9px] top-0 h-6 w-6 border-r-4 border-t-4 border-[#c90012]" />
    <div className="absolute bottom-0 left-0 h-6 w-6 border-b-4 border-l-2 border-[#c90012]" />
    <div className="absolute bottom-0 right-[9px] h-6 w-6 border-b-4 border-r-4 border-[#c90012]" />
    <svg width="60" height="6" viewBox="0 0 60 6" className="absolute -top-[3px] left-[925px]">
      <path d="M0 0H60V6H0Z" fill="#d02a3a" />
      <path d="M2 2H60M2 4.500H60" stroke="#f3b6bb" strokeDasharray="2 2" />
    </svg>
  </div>
);

const App = () => {
  return (
    <div className="relative flex h-screen flex-col overflow-hidden bg-[#eeeeee] font-['Liberation_Sans','Noto_Sans_CJK_SC',sans-serif] text-gray-900">
      <div className="h-[2px] shrink-0 bg-gradient-to-r from-[#0f6f7c] via-[#2ba3a5] to-[#128f92]" />
      <header className="shrink-0">
        <div className="flex h-[27px] items-center pl-[2px] pr-px">
          <Quick />
          <div className="flex-1 text-center text-xs text-gray-700">GB 50017-2017 钢结构设计标准（含条文说明）.pdf - 福昕阅读器</div>
          <WindowButtons />
        </div>
        <div className="flex h-[22px] items-center">
          <button className="mr-px h-full w-[63px] bg-[#e27d0c] text-xs text-white">文件</button>
          <div className="flex flex-1 pt-[2px] text-[13px] text-gray-700">
            {['主页', '注释', '视图', '表单', '保护', '分享', '帮助'].map((m) => (
              <button key={m} className="w-[52px]">{m}</button>
            ))}
          </div>
          <SearchBar />
        </div>
        <div className="flex h-8 items-start border-b border-gray-400">
          <div className="flex flex-1 self-end pl-[37px] text-xs">
            <Tab className="w-[160px]">
              <button className="relative pl-[22px]">开始</button>
            </Tab>
            <Tab active className="-ml-[9px] w-[194px]">
              <button className="relative flex-1 pl-[22px] text-left">GB 50017-2017 钢结...</button>
              <button aria-label="关闭标签" className="relative mr-3">
                <svg width="8" height="8" viewBox="0 0 8 8" stroke="#000" strokeWidth="2"><path d="M0 0L8 8M8 0L0 8" /></svg>
              </button>
            </Tab>
          </div>
          <button aria-label="标签列表" className="mr-[7px] mt-[14px]">
            <svg width="10" height="5" viewBox="0 0 10 5"><path d="M0 0H10L5 5Z" /></svg>
          </button>
          <Banner />
        </div>
      </header>
      <div className="flex min-h-0 flex-1">
        <BookmarkPanel />
        <DocumentView />
        <RightEdge />
      </div>
      <StatusBar />
      <Taskbar />
      <ClassToolbar />
      <ImeBar />
      <button className="absolute -right-[28px] bottom-[227px] h-[48px] w-[48px] rounded-full border-2 border-white bg-gradient-to-b from-[#7be07b] to-[#2fc84a] pl-[5px] text-left text-[11px] font-bold text-white shadow-md outline outline-1 outline-gray-400">38</button>
      <RecordFrame />
    </div>
  );
};

export default App;
